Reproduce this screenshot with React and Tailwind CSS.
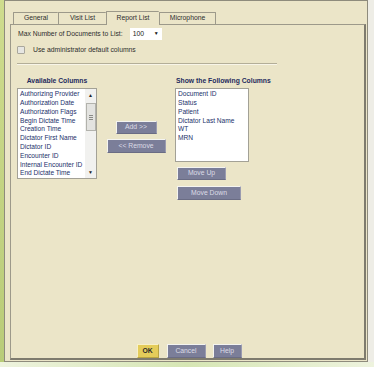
import React from 'react';

const available = [
  'Authorizing Provider',
  'Authorization Date',
  'Authorization Flags',
  'Begin Dictate Time',
  'Creation Time',
  'Dictator First Name',
  'Dictator ID',
  'Encounter ID',
  'Internal Encounter ID',
  'End Dictate Time',
];

const shown = ['Document ID', 'Status', 'Patient', 'Dictator Last Name', 'WT', 'MRN'];

const tabs = [
  { label: 'General', cls: 'w-[45px] h-[12px]' },
  { label: 'Visit List', cls: 'w-[48px] h-[12px]' },
  { label: 'Report List', cls: 'w-[53px] h-[14px] -mb-px relative bg-[#ebe5c8]', active: true },
  { label: 'Microphone', cls: 'w-[57px] h-[12px] border-r' },
];

const Btn = ({ children, className = '' }) => (
  <div
    className={`flex items-center justify-center bg-[#7b7e99] text-[#dcdce6] text-[6.8px] leading-none border border-t-[#f4f4f0] border-l-[#f4f4f0] border-r-[#9a9bb0] border-b-[#6a6c84] ${className}`}
  >
    {children}
  </div>
);

const App = () => {
  return (
    <div className="w-[374px] h-[367px] flex flex-col bg-[#e4ecd0] font-['Liberation_Sans',Arial,sans-serif] text-[6.8px] text-[#2e2e2e] overflow-hidden">
      <div className="flex">
        {/* desktop strip */}
        <div className="w-[4px] h-[362px] bg-gradient-to-b from-[#cfdc8e] to-[#b9cc78]"></div>

        {/* window */}
        <div className="w-[364px] h-[362px] bg-[#ebe5c8] border border-[#8e8b7c] flex flex-col pb-px">
          {/* tabs */}
          <div className="flex items-end pt-[10px] ml-[8px] h-[23px]">
            {tabs.map((t) => (
              <div
                key={t.label}
                className={`flex items-center justify-center border-t border-l border-[#9c998a] rounded-t-[1px] ${t.cls} ${t.active ? 'z-10' : ''}`}
              >
                {t.label}
              </div>
            ))}
          </div>

          {/* panel */}
          <div className="ml-[5px] w-[356px] h-[336px] border-t border-l border-[#9c998a] border-r-2 border-b-2 border-r-[#7e7b6e] border-b-[#7e7b6e] flex flex-col">
            <div className="flex items-center h-[12px] mt-[3px] pl-[7px]">
              <span>Max Number of Documents to List:</span>
              <div className="ml-[7px] w-[32px] h-[12px] bg-white flex items-center justify-between pl-[3px] pr-[3px]">
                <span className="text-[#222]">100</span>
                <span className="text-[5px] text-[#111]">▼</span>
              </div>
            </div>

            <div className="flex items-center mt-[5px] pl-[6px]">
              <div className="w-[8px] h-[8px] bg-[#e6e6e2] border border-[#a9a79c] rounded-[1px]"></div>
              <span className="ml-[8px]">Use administrator default columns</span>
            </div>

            <div className="ml-[6px] mt-[8px] w-[260px] h-[2px] border-t border-[#b3ae98] border-b border-b-[#f8f5e8]"></div>

            {/* columns */}
            <div className="flex pl-[6px] mt-[11px]">
              <div className="w-[80px] flex flex-col items-center">
                <div className="h-[9px] leading-[9px] font-bold text-[#1e2b5e] whitespace-nowrap">Available Columns</div>
                <div className="mt-[3px] w-[80px] h-[91px] bg-white border border-[#a3a196] flex">
                  <div className="flex-1 pt-[1px] pl-[2px] text-[#22306a] text-[6.6px] leading-[8.8px] overflow-hidden">
                    {available.map((a) => (
                      <div key={a} className="whitespace-nowrap">{a}</div>
                    ))}
                  </div>
                  <div className="w-[11px] bg-[#f1f1ef] flex flex-col items-center pt-px pb-px">
                    <div className="h-[10px] text-[5px] leading-[10px] text-[#222]">▲</div>
                    <div className="mt-[3px] w-[10px] h-[28px] bg-[#e3e3e0] border border-[#b2b2ac] flex flex-col items-center justify-center gap-[1px]">
                      <div className="w-[4px] h-px bg-[#8a8a86]"></div>
                      <div className="w-[4px] h-px bg-[#8a8a86]"></div>
                      <div className="w-[4px] h-px bg-[#8a8a86]"></div>
                    </div>
                    <div className="mt-auto h-[10px] text-[5px] leading-[10px] text-[#222]">▼</div>
                  </div>
                </div>
              </div>

              <div className="w-[78px] flex flex-col items-center pt-[45px]">
                <Btn className="w-[41px] h-[13px]">Add &gt;&gt;</Btn>
                <Btn className="mt-[5px] w-[59px] h-[14px]">&lt;&lt; Remove</Btn>
              </div>

              <div className="flex flex-col">
                <div className="h-[9px] leading-[9px] font-bold text-[#1e2b5e] whitespace-nowrap pl-px">Show the Following Columns</div>
                <div className="mt-[3px] w-[74px] h-[74px] bg-white border border-[#a3a196] pt-[1px] pl-[2px] text-[#22306a] text-[6.6px] leading-[8.8px]">
                  {shown.map((s) => (
                    <div key={s} className="whitespace-nowrap">{s}</div>
                  ))}
                </div>
                <Btn className="mt-[5px] ml-[2px] w-[49px] h-[13px]">Move Up</Btn>
                <Btn className="mt-[6px] ml-[2px] w-[64px] h-[14px]">Move Down</Btn>
              </div>
            </div>

            {/* footer buttons */}
            <div className="mt-auto flex justify-center pl-[3px]">
              <div className="w-[22px] h-[14px] flex items-center justify-center bg-[#e4cc5a] text-[#2a2a2a] font-bold border border-t-[#f7f0c8] border-l-[#f7f0c8] border-r-[#b8a443] border-b-[#b8a443]">
                OK
              </div>
              <Btn className="ml-[8px] w-[39px] h-[14px]">Cancel</Btn>
              <Btn className="ml-[7px] w-[29px] h-[14px]">Help</Btn>
            </div>
          </div>
        </div>

        <div className="w-[6px] h-[362px] bg-[#eeede6]"></div>
      </div>
      <div className="h-[5px] bg-gradient-to-r from-[#eef3de] via-[#d6e6b4] to-[#eef3de]"></div>
    </div>
  );
};

export default App;
